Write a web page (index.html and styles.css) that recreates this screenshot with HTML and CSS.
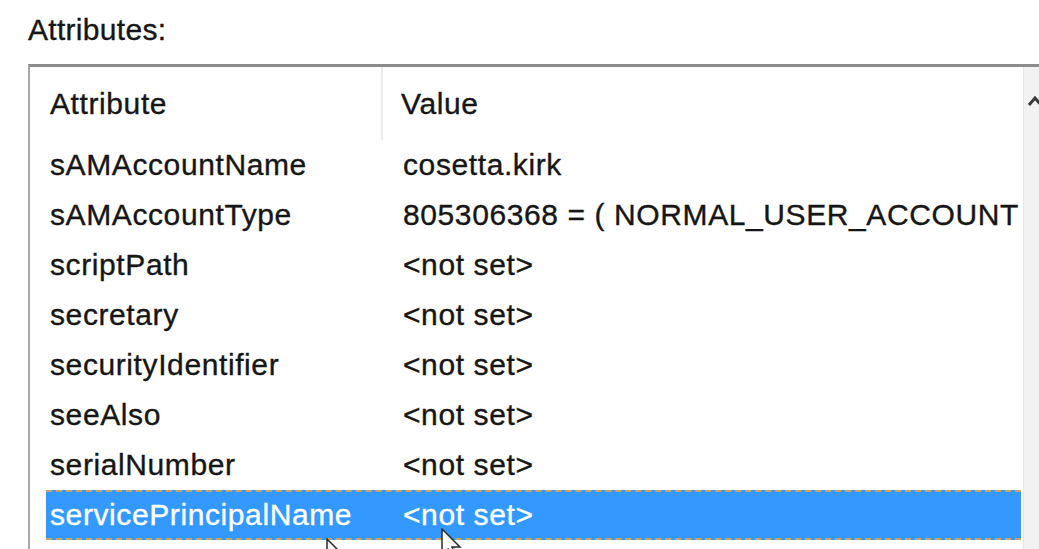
FILE: index.html
```html
<!DOCTYPE html>
<html>
<head>
<meta charset="utf-8">
<link rel="stylesheet" href="styles.css">
</head>
<body>
<div class="page">
  <div class="label">Attributes:</div>
  <div class="box">
    <div class="list">
      <div class="header">
        <div class="hcell hcell-first">Attribute</div>
        <div class="hcell hcell-second">Value</div>
      </div>
      <div class="row"><div class="cell name">sAMAccountName</div><div class="cell value">cosetta.kirk</div></div>
      <div class="row"><div class="cell name">sAMAccountType</div><div class="cell value">805306368 = ( NORMAL_USER_ACCOUNT</div></div>
      <div class="row"><div class="cell name">scriptPath</div><div class="cell value">&lt;not set&gt;</div></div>
      <div class="row"><div class="cell name">secretary</div><div class="cell value">&lt;not set&gt;</div></div>
      <div class="row"><div class="cell name">securityIdentifier</div><div class="cell value">&lt;not set&gt;</div></div>
      <div class="row"><div class="cell name">seeAlso</div><div class="cell value">&lt;not set&gt;</div></div>
      <div class="row"><div class="cell name">serialNumber</div><div class="cell value">&lt;not set&gt;</div></div>
      <div class="row selected"><div class="cell name">servicePrincipalName</div><div class="cell value">&lt;not set&gt;</div></div>
    </div>
    <div class="scrollbar">
      <svg class="arrow-up" width="16" height="12" viewBox="0 0 16 12"><path d="M2 10 L8 3 L14 10" fill="none" stroke="#3a3a3a" stroke-width="3"/></svg>
    </div>
  </div>
  <svg class="cursor cursor-a" width="24" height="34" viewBox="0 0 24 34"><path d="M1 1 L1 27 L7 21 L12 32 L16 30 L11 19 L19 19 Z" fill="#ffffff" stroke="#2a2a2a" stroke-width="1.5"/></svg>
  <svg class="cursor cursor-b" width="24" height="34" viewBox="0 0 24 34"><path d="M1 1 L1 27 L7 21 L12 32 L16 30 L11 19 L19 19 Z" fill="#ffffff" stroke="#2a2a2a" stroke-width="1.5"/></svg>
</div>
</body>
</html>
```

FILE: styles.css
```css
html, body {
  margin: 0;
  padding: 0;
  background: #ffffff;
  overflow: hidden;
}

body {
  width: 1039px;
  height: 549px;
  font-family: "Liberation Sans", Arial, sans-serif;
  font-size: 30px;
  letter-spacing: 0.6px;
  color: #161616;
  -webkit-text-stroke: 0.35px #161616;
}

.page {
  position: relative;
  padding-left: 28px;
  height: 549px;
  overflow: hidden;
}

.label {
  height: 64px;
  line-height: 60px;
  letter-spacing: 0.3px;
}

.box {
  display: flex;
  width: 1020px;
  height: 520px;
  border-top: 3px solid #8c8c8c;
  border-left: 2px solid #a8a8a8;
  background: #ffffff;
}

.list {
  width: 993px;
  padding: 0 2px 0 16px;
  box-sizing: border-box;
  flex: none;
}

.header {
  display: grid;
  grid-template-columns: 337px 1fr;
  height: 73px;
}

.hcell {
  line-height: 73px;
  white-space: nowrap;
}

.hcell-first {
  padding-left: 4px;
  border-right: 2px solid #ebebeb;
}

.hcell-second {
  padding-left: 18px;
}

.row {
  display: grid;
  grid-template-columns: 337px 1fr;
  height: 50px;
  line-height: 50px;
  box-sizing: border-box;
}

.cell {
  white-space: nowrap;
  overflow: hidden;
}

.name {
  padding-left: 4px;
}

.value {
  padding-left: 20px;
}

.row.selected {
  background: #3399ff;
  color: #ffffff;
  -webkit-text-stroke: 0.35px #ffffff;
  border-top: 2px dashed #c9a46a;
  border-bottom: 2px dashed #c9a46a;
  line-height: 46px;
}

.scrollbar {
  flex: none;
  width: 25px;
  background: #f2f2f2;
  border-left: 1px solid #e6e6e6;
}

.arrow-up {
  display: block;
  margin: 28px 0 0 3px;
}

.cursor {
  position: absolute;
  -webkit-text-stroke: 0;
}

.cursor-a {
  left: 441px;
  top: 528px;
}

.cursor-b {
  left: 326px;
  top: 538px;
}
```
